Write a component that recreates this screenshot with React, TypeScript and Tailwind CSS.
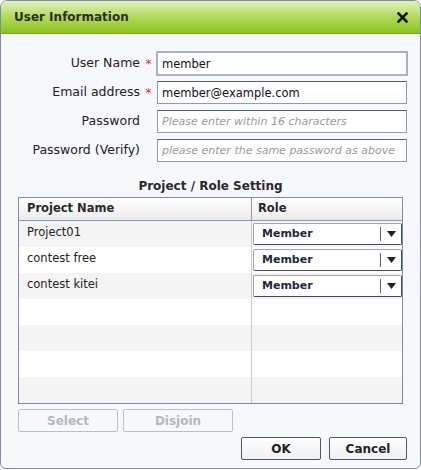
import { useState } from 'react'

type Assignment = {
  project: string
  role: string
}

const assignments: Assignment[] = [
  { project: 'Project01', role: 'Member' },
  { project: 'contest free', role: 'Member' },
  { project: 'contest kitei', role: 'Member' },
]

const TOTAL_ROWS = 7

function FieldRow({
  label,
  required,
  children,
}: {
  label: string
  required?: boolean
  children: React.ReactNode
}) {
  return (
    <div className="flex items-center h-[29px]">
      <div className="w-[139px] text-right text-[12.5px] text-[#222]">{label}</div>
      <div className="w-[17px] text-center text-[12px] text-[#e0282e] leading-none pt-[1px]">
        {required ? '*' : ''}
      </div>
      {children}
    </div>
  )
}

function RoleSelect({ value }: { value: string }) {
  return (
    <div className="mt-[2px] ml-[1px] h-[22px] w-[149px] flex items-center bg-white border border-[#9aa6b4] border-b-[#3f4b59] border-r-[#3f4b59] rounded-[2px]">
      <span className="flex-1 pl-[8px] text-[11px] font-bold text-[#1e2a38]">{value}</span>
      <span className="h-[14px] w-px bg-[#5b6675]" />
      <span className="w-[20px] flex justify-center">
        <svg width="9" height="6" viewBox="0 0 9 6">
          <path d="M0 0h9L4.5 6z" fill="#222" />
        </svg>
      </span>
    </div>
  )
}

export default function App() {
  const [userName, setUserName] = useState('member')
  const [email, setEmail] = useState('member@example.com')

  const rows = Array.from({ length: TOTAL_ROWS }, (_, i) => assignments[i])

  return (
    <div className="w-[421px] h-[469px] flex flex-col bg-[#f7f8fc] border border-[#7b8da6] rounded-t-[7px] rounded-b-[6px] overflow-hidden font-['DejaVu_Sans',sans-serif]">
      {/* title bar */}
      <div className="h-[33px] shrink-0 flex items-center justify-between pl-[13px] pr-[12px] bg-gradient-to-b from-[#e2f1bc] via-[#b2da58] to-[#8dc31a] border-b border-[#78ac14]">
        <span className="text-[12px] font-bold text-[#2e2e2e]">User Information</span>
        <svg width="11" height="11" viewBox="0 0 11 11">
          <path d="M1.5 1.5l8 8M9.5 1.5l-8 8" stroke="#111" strokeWidth="2.6" strokeLinecap="square" />
        </svg>
      </div>

      <div className="flex flex-col pt-[15px]">
        <FieldRow label="User Name" required>
          <input
            value={userName}
            onChange={(e) => setUserName(e.target.value)}
            className="h-[25px] w-[252px] -ml-[1px] px-[4px] text-[11.5px] text-[#111] bg-white border-2 border-[#a7b4c4] outline-none"
          />
        </FieldRow>
        <FieldRow label="Email address" required>
          <input
            value={email}
            onChange={(e) => setEmail(e.target.value)}
            className="h-[23px] w-[250px] px-[4px] text-[11.5px] text-[#111] bg-white border border-[#8e9cb0] border-t-[#55606e] outline-none"
          />
        </FieldRow>
        <FieldRow label="Password">
          <input
            type="password"
            placeholder="Please enter within 16 characters"
            className="h-[23px] w-[250px] px-[4px] text-[11px] italic bg-white border border-[#8e9cb0] border-t-[#55606e] outline-none placeholder:text-[#9a9a9a]"
          />
        </FieldRow>
        <FieldRow label="Password (Verify)">
          <input
            type="password"
            placeholder="please enter the same password as above"
            className="h-[23px] w-[250px] px-[4px] text-[11px] italic bg-white border border-[#8e9cb0] border-t-[#55606e] outline-none placeholder:text-[#9a9a9a]"
          />
        </FieldRow>
      </div>

      <div className="mt-[12px] text-center text-[12px] font-bold text-[#2a2a2a]">Project / Role Setting</div>

      {/* project / role grid */}
      <div className="mt-[2px] ml-[17px] w-[385px] border border-[#7b8da6] bg-white">
        <div className="flex h-[23px] bg-gradient-to-b from-white to-[#ebebeb] border-b border-[#8c9aac] text-[11.5px] font-bold text-[#2a2a2a]">
          <div className="w-[233px] pl-[8px] flex items-center border-r border-[#8c9aac]">Project Name</div>
          <div className="flex-1 pl-[6px] flex items-center">Role</div>
        </div>
        {rows.map((row, i) => (
          <div key={i} className={`flex h-[26px] ${i % 2 === 0 ? 'bg-[#f4f4f4]' : 'bg-white'}`}>
            <div className="w-[233px] pl-[8px] pt-[3px] text-[11.5px] text-[#222] border-r border-[#c9c9c9]">
              {row?.project}
            </div>
            <div className="flex-1">{row && <RoleSelect value={row.role} />}</div>
          </div>
        ))}
      </div>

      <div className="mt-[5px] ml-[17px] flex gap-[5px]">
        <button disabled className="h-[23px] w-[100px] text-[12px] font-bold text-[#b4b8be] bg-[#f7f8fb] border border-[#b9c0ca] rounded-[2px]">
          Select
        </button>
        <button disabled className="h-[23px] w-[110px] text-[12px] font-bold text-[#b4b8be] bg-[#f7f8fb] border border-[#b9c0ca] rounded-[2px]">
          Disjoin
        </button>
      </div>

      <div className="mt-[5px] mr-[13px] flex justify-end gap-[8px]">
        <button className="h-[23px] w-[80px] text-[12px] font-bold text-[#222] bg-gradient-to-b from-white to-[#eef0f3] border border-[#4d5866] rounded-[2px]">
          OK
        </button>
        <button className="h-[23px] w-[78px] text-[12px] font-bold text-[#222] bg-gradient-to-b from-white to-[#eef0f3] border border-[#4d5866] rounded-[2px]">
          Cancel
        </button>
      </div>
    </div>
  )
}
